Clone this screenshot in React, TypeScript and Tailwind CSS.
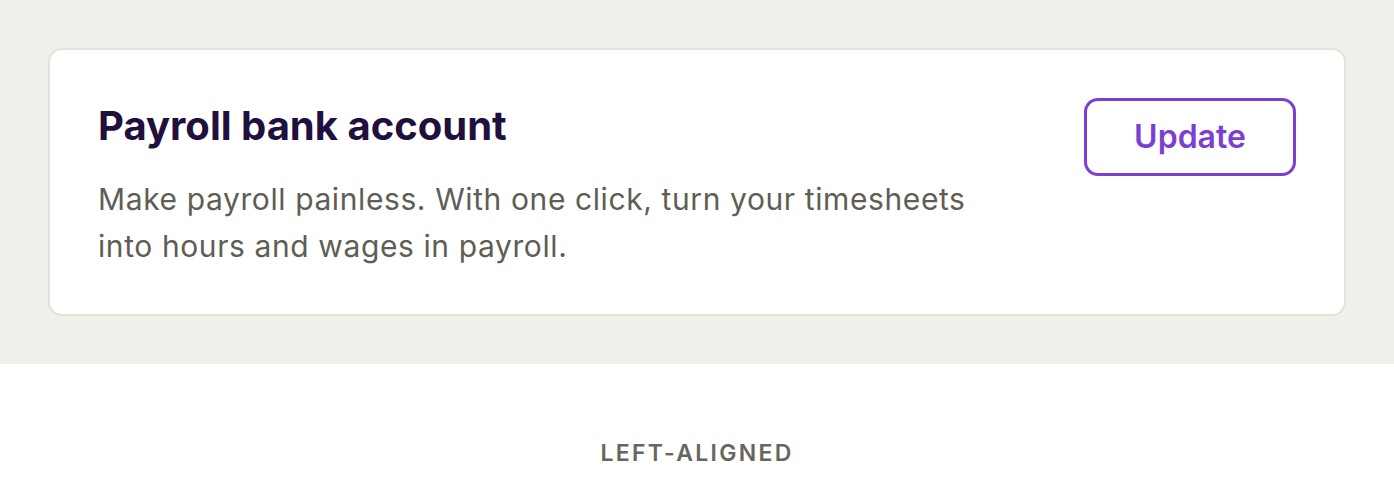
export default function App() {
  return (
    <div className="min-h-screen bg-white font-['Inter','Liberation_Sans',sans-serif]">
      {/* Preview area */}
      <div className="bg-[#f0f0eb] p-12">
        <div className="flex items-start justify-between rounded-[14px] border-2 border-[#e4e3da] bg-white px-12 pt-12 pb-[44px]">
          <div className="max-w-[890px]">
            <h2 className="mt-[2px] text-[40px] font-bold leading-[52px] text-[#210f3d]">
              Payroll bank account
            </h2>
            <p className="mt-[24px] text-[30px] leading-[47px] tracking-[0.02em] text-[#5e5e55]">
              Make payroll painless. With one click, turn your timesheets into hours and wages in payroll.
            </p>
          </div>
          <button className="flex h-[78px] w-[212px] items-center justify-center rounded-[14px] border-[3px] border-[#7b3fd4] text-[32px] font-semibold text-[#7b3fd4]">
            Update
          </button>
        </div>
      </div>

      {/* Caption */}
      <div className="flex justify-center pt-[72px]">
        <span className="text-[23px] font-semibold tracking-[0.1em] text-[#66665d]">LEFT-ALIGNED</span>
      </div>
    </div>
  );
}
